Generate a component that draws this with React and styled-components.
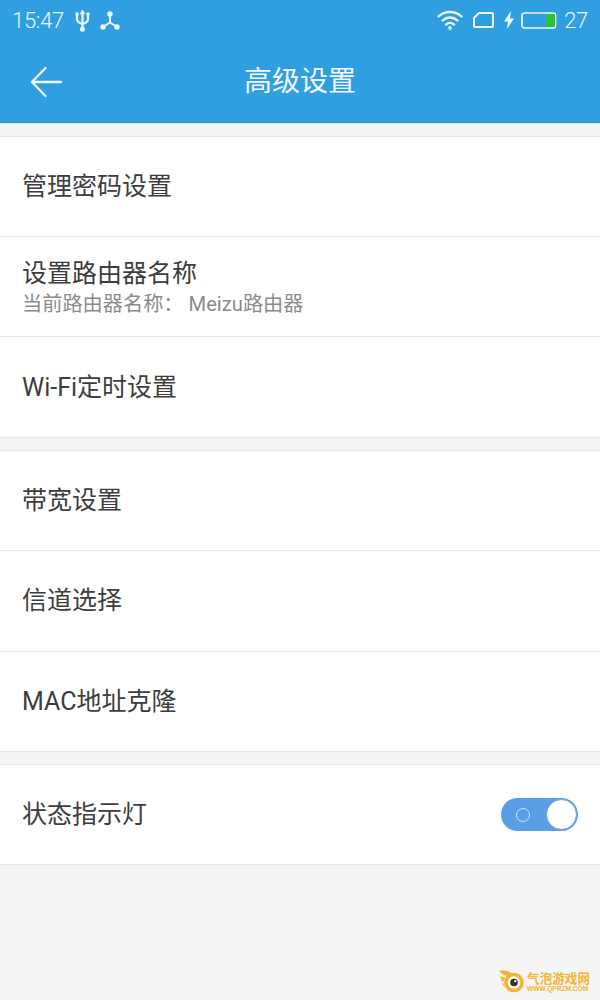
import React from "react";
import styled, { createGlobalStyle } from "styled-components";

const Global = createGlobalStyle`
  html, body { margin: 0; padding: 0; background: #f5f5f5; }
  body { font-family: "Roboto", "Noto Sans CJK SC", sans-serif; }
`;

const Page = styled.div`
  position: relative;
  width: 600px;
  height: 1000px;
  overflow: hidden;
  background: #f5f5f5;
`;

const Header = styled.header`
  height: 123px;
  background: #2f9fe2;
  border-bottom: 1px solid #cfe6f5;
  color: #fff;
`;

const StatusBar = styled.div`
  height: 40px;
  padding: 0 12px;
  display: flex;
  align-items: center;
  justify-content: space-between;
  color: #eef8fe;
`;

const StatusGroup = styled.div`
  display: flex;
  align-items: center;
`;

const StatusText = styled.span`
  font-family: "Roboto", sans-serif;
  font-weight: 300;
  font-size: 22px;
  line-height: 40px;
  letter-spacing: -0.3px;
  margin-top: 1px;
`;

const IconSlot = styled.span`
  display: flex;
  margin-left: ${(p) => p.$ml}px;
`;

const TitleBar = styled.div`
  height: 83px;
  display: grid;
  grid-template-columns: 100px 1fr 100px;
  align-items: center;
`;

const BackButton = styled.button`
  all: unset;
  display: flex;
  align-items: center;
  padding-left: 29px;
  height: 100%;
`;

const Title = styled.h1`
  margin: 0;
  text-align: center;
  font-family: "Noto Sans CJK SC", sans-serif;
  font-weight: 400;
  font-size: 28px;
  line-height: 79px;
  height: 83px;
  color: #f2f9fe;
`;

const Section = styled.section`
  margin-top: 12px;
  background: #fff;
  border-top: 1px solid #e6e6e6;
  border-bottom: 1px solid #e6e6e6;
`;

const Row = styled.div`
  box-sizing: content-box;
  height: ${(p) => p.$h || 99}px;
  padding: 0 22px;
  display: flex;
  align-items: center;
  justify-content: space-between;
  & + & {
    border-top: 1px solid #e6e6e6;
  }
`;

const RowText = styled.div`
  display: flex;
  flex-direction: column;
  margin-top: 2px;
`;

const RowLabel = styled.div`
  font-family: "Roboto", "Noto Sans CJK SC", sans-serif;
  font-size: 25px;
  line-height: 30px;
  color: #3d3d3d;
  margin-top: ${(p) => p.$drop || 0}px;
`;

const RowHint = styled.div`
  margin-top: 2px;
  font-family: "Roboto", "Noto Sans CJK SC", sans-serif;
  font-size: 20.2px;
  line-height: 26px;
  color: #8b8b8b;
`;

const Toggle = styled.div`
  width: 77px;
  height: 33px;
  border-radius: 17px;
  background: #5b9ee8;
  position: relative;
  display: flex;
  align-items: center;
`;

const ToggleRing = styled.span`
  width: 12px;
  height: 12px;
  margin-left: 15px;
  border: 1px solid #cfe6fb;
  border-radius: 50%;
`;

const ToggleKnob = styled.span`
  position: absolute;
  right: 1px;
  top: 1px;
  width: 29px;
  height: 29px;
  background: #fff;
  border: 1px solid #7b9cc4;
  border-radius: 50%;
`;

const Watermark = styled.div`
  position: absolute;
  right: 10px;
  bottom: 7px;
  display: flex;
  align-items: center;
  gap: 3px;
  color: #f5b32e;
`;

const WatermarkText = styled.div`
  display: flex;
  flex-direction: column;
  align-items: flex-start;
`;

const WatermarkName = styled.span`
  font-family: "Noto Sans CJK SC", sans-serif;
  font-weight: 700;
  font-size: 12.6px;
  line-height: 15px;
  white-space: nowrap;
`;

const WatermarkUrl = styled.span`
  font-family: "Liberation Sans", sans-serif;
  font-weight: 700;
  font-size: 6.6px;
  line-height: 8px;
  white-space: nowrap;
`;

function UsbIcon() {
  return (
    <svg width="15" height="23" viewBox="0 0 15 23" fill="none" stroke="currentColor" strokeWidth="2.2" strokeLinecap="round">
      <path d="M7.500 4v15" />
      <path d="M2 6v4c0 3 2 4 5.500 5 3.500-1 5.500-2 5.500-5V6" />
      <path d="M5.300 4.500 7.500 1l2.200 3.500z" fill="currentColor" strokeWidth="0.8" />
      <rect x="0.500" y="3.500" width="3" height="3" fill="currentColor" stroke="none" />
      <circle cx="13" cy="5" r="1.800" fill="currentColor" stroke="none" />
      <circle cx="7.500" cy="20.200" r="2.500" fill="currentColor" stroke="none" />
    </svg>
  );
}

function NetworkIcon() {
  return (
    <svg width="20" height="19" viewBox="0 0 20 19" fill="none" stroke="currentColor" strokeWidth="2">
      <path d="M10 3v8.500L3 16M10 11.500l7 4.500" />
      <circle cx="10" cy="3" r="2.700" fill="currentColor" stroke="none" />
      <circle cx="3" cy="16" r="2.700" fill="currentColor" stroke="none" />
      <circle cx="17" cy="16" r="2.700" fill="currentColor" stroke="none" />
    </svg>
  );
}

function WifiIcon() {
  return (
    <svg width="26" height="21" viewBox="0 0 26 21" fill="none" stroke="currentColor" strokeWidth="2.300" strokeLinecap="round">
      <path d="M1.500 6.500C8 .5 18 .5 24.500 6.500" />
      <path d="M5.500 10.500C10 6.500 16 6.500 20.500 10.500" />
      <path d="M9 14.500c2.500-2 5.500-2 8 0" />
      <path d="M10.800 17.500 13 15.800l2.200 1.700-2.200 3z" fill="currentColor" stroke="none" />
    </svg>
  );
}

function SimIcon() {
  return (
    <svg width="21" height="16" viewBox="0 0 21 16" fill="none" stroke="currentColor" strokeWidth="2" strokeLinejoin="round">
      <path d="M6 1h13a1 1 0 0 1 1 1v12a1 1 0 0 1-1 1H2a1 1 0 0 1-1-1V6z" />
    </svg>
  );
}

function BoltIcon() {
  return (
    <svg width="12" height="18" viewBox="0 0 12 18" fill="currentColor">
      <path d="M8 0 1 10.500h4L4 18l7-10.500H7z" />
    </svg>
  );
}

function BatteryIcon() {
  return (
    <svg width="36" height="17" viewBox="0 0 36 17" fill="none">
      <rect x="1" y="1" width="33.500" height="15" rx="2.500" stroke="currentColor" strokeWidth="1.700" />
      <rect x="25" y="2" width="9" height="13" fill="#27c634" />
    </svg>
  );
}

function BackArrow() {
  return (
    <svg width="34" height="32" viewBox="0 0 34 32" fill="none" stroke="#f2f9fe" strokeWidth="2.300" strokeLinecap="round" strokeLinejoin="round">
      <path d="M32 16H3M16.500 2 3 16l13.500 14" />
    </svg>
  );
}

function BubbleLogo() {
  return (
    <svg width="25" height="23" viewBox="0 0 25 23">
      <path d="M0 1c4-1 9 0 13 2.500L8 6C5 5.500 2.500 3.500 0 1z" fill="#f5b32e" />
      <path d="M1 6.500c2 0 3.500.5 5 1.500l-2 4C2.500 10.500 1.500 8.500 1 6.500z" fill="#f5b32e" />
      <path d="M3 13.500c1 0 2 .5 2.500 1l.5 3c-1-1-2-2.500-3-4z" fill="#f5b32e" />
      <circle cx="15" cy="12.500" r="9.800" fill="#f5b32e" />
      <circle cx="15" cy="12.500" r="6.200" fill="#fff" />
      <circle cx="15" cy="12.500" r="3.800" fill="#3b3223" />
      <circle cx="16.300" cy="11.200" r="1.100" fill="#fff" />
    </svg>
  );
}

export default function App() {
  return (
    <Page>
      <Global />
      <Header>
        <StatusBar>
          <StatusGroup>
            <StatusText>15:47</StatusText>
            <IconSlot $ml={11}><UsbIcon /></IconSlot>
            <IconSlot $ml={10}><NetworkIcon /></IconSlot>
          </StatusGroup>
          <StatusGroup>
            <IconSlot $ml={0}><WifiIcon /></IconSlot>
            <IconSlot $ml={10}><SimIcon /></IconSlot>
            <IconSlot $ml={9}><BoltIcon /></IconSlot>
            <IconSlot $ml={6}><BatteryIcon /></IconSlot>
            <IconSlot $ml={7}><StatusText>27</StatusText></IconSlot>
          </StatusGroup>
        </StatusBar>
        <TitleBar>
          <BackButton aria-label="返回">
            <BackArrow />
          </BackButton>
          <Title>高级设置</Title>
          <span />
        </TitleBar>
      </Header>

      <Section>
        <Row><RowLabel>管理密码设置</RowLabel></Row>
        <Row>
          <RowText>
            <RowLabel>设置路由器名称</RowLabel>
            <RowHint>当前路由器名称： Meizu路由器</RowHint>
          </RowText>
        </Row>
        <Row $h={100}><RowLabel $drop={2}>Wi-Fi定时设置</RowLabel></Row>
      </Section>

      <Section>
        <Row><RowLabel>带宽设置</RowLabel></Row>
        <Row $h={100}><RowLabel>信道选择</RowLabel></Row>
        <Row><RowLabel>MAC地址克隆</RowLabel></Row>
      </Section>

      <Section>
        <Row>
          <RowLabel>状态指示灯</RowLabel>
          <Toggle>
            <ToggleRing />
            <ToggleKnob />
          </Toggle>
        </Row>
      </Section>

      <Watermark>
        <BubbleLogo />
        <WatermarkText>
          <WatermarkName>气泡游戏网</WatermarkName>
          <WatermarkUrl>WWW.QPRZM.COM</WatermarkUrl>
        </WatermarkText>
      </Watermark>
    </Page>
  );
}
